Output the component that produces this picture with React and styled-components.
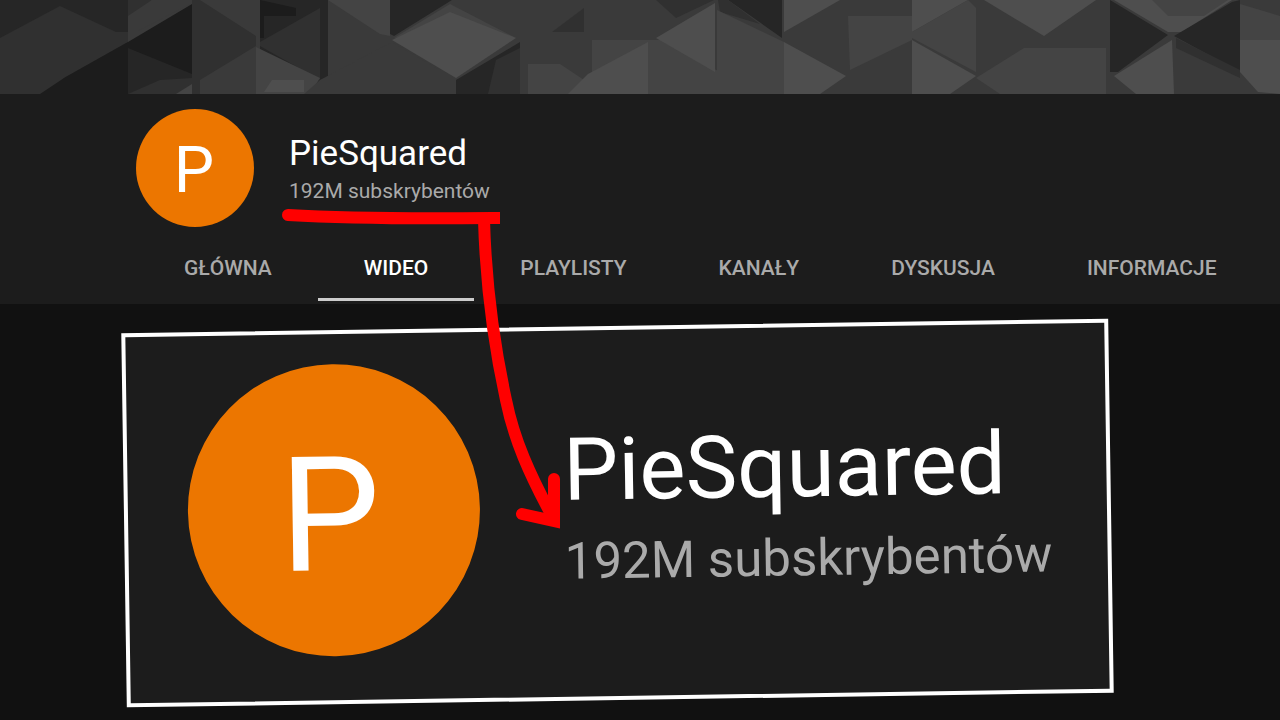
import React from 'react';
import styled, { createGlobalStyle } from 'styled-components';

const GlobalStyle = createGlobalStyle`
  * {
    box-sizing: border-box;
  }

  body {
    margin: 0;
    background-color: #111;
    font-family: Roboto, 'Liberation Sans', sans-serif;
  }
`;

const Page = styled.div`
  position: relative;
  min-height: 100vh;
  overflow: hidden;
  background-color: #111;
`;

const BannerArt = styled.svg`
  display: block;
  width: 100%;
  height: 94px;
  background-color: #3a3a3a;
`;

const ChannelHeader = styled.header`
  padding-bottom: 3px;
  background-color: #1c1c1c;
`;

const ChannelInfo = styled.div`
  display: flex;
  align-items: center;
  gap: 35px;
  padding: 15px 136px 0;
`;

const Avatar = styled.div`
  display: flex;
  flex: none;
  align-items: center;
  justify-content: center;
  width: ${({ $large }) => ($large ? '292px' : '118px')};
  height: ${({ $large }) => ($large ? '292px' : '118px')};
  padding: ${({ $large }) => ($large ? '12px 8px 0 0' : '6px 2px 0 0')};
  border-radius: 50%;
  background-color: #ec7600;
  color: #fff;
  font-size: ${({ $large }) => ($large ? '160px' : '64px')};
  font-weight: 400;
  line-height: 1;
`;

const Name = styled.h1`
  margin: 0;
  color: #fff;
  font-size: ${({ $large }) => ($large ? '87px' : '35px')};
  font-weight: 400;
  line-height: ${({ $large }) => ($large ? '108px' : '44px')};
`;

const Subscribers = styled.p`
  margin: 0;
  color: #aaa;
  font-size: ${({ $large }) => ($large ? '51px' : '21px')};
  line-height: ${({ $large }) => ($large ? '76px' : '30px')};
`;

const ChannelText = styled.div`
  padding-top: 2px;
`;

const Tabs = styled.nav`
  display: flex;
  padding-left: 138px;
`;

const Tab = styled.a`
  padding: 6px 46px 0;
  height: 74px;
  border-bottom: 3px solid ${({ $active }) => ($active ? '#ccc' : 'transparent')};
  color: ${({ $active }) => ($active ? '#fff' : '#aaa')};
  font-size: 21px;
  font-weight: 500;
  line-height: 70px;
  text-decoration: none;
  white-space: nowrap;
`;

const CloseUp = styled.section`
  display: flex;
  align-items: flex-start;
  gap: 84px;
  margin: 22px 169px 12px 124px;
  padding: 30px 0 44px 60px;
  border: 4px solid #fff;
  background-color: #1c1c1c;
  transform: rotate(-0.85deg);
`;

const CloseUpText = styled.div`
  padding-top: 55px;
`;

const Arrow = styled.svg`
  position: absolute;
  top: 200px;
  left: 280px;
  width: 300px;
  height: 340px;
  pointer-events: none;
`;

const tabs = ['GŁÓWNA', 'WIDEO', 'PLAYLISTY', 'KANAŁY', 'DYSKUSJA', 'INFORMACJE'];

const facets = [
  ['#262626', '0,0 128,0 128,94 0,94'],
  ['#303030', '0,38 60,6 116,32 128,32 128,42 64,78 48,94 0,94'],
  ['#1c1c1c', '40,94 64,78 128,42 192,4 192,94'],
  ['#303030', '128,0 152,0 128,24'],
  ['#3a3a3a', '152,0 192,0 192,3 136,32 128,32 128,16'],
  ['#262626', '128,48 192,74 192,94 128,94'],
  ['#303030', '160,80 192,78 192,94 128,94'],
  ['#444', '176,94 192,84 192,94'],
  ['#303030', '192,0 200,0 256,36 256,46 200,80 200,94 192,94'],
  ['#262626', '260,0 328,0 328,94 260,94'],
  ['#1c1c1c', '260,0 296,8 296,16 264,16 264,38 260,38'],
  ['#303030', '320,8 260,42 260,46 320,80'],
  ['#444', '256,47 320,78 310,94 256,94'],
  ['#4e4e4e', '272,80 304,80 304,92 264,92'],
  ['#3a3a3a', '320,80 392,42 440,70 440,94 304,94'],
  ['#444', '328,0 390,0 390,36 380,34'],
  ['#262626', '390,0 452,0 394,36 390,34'],
  ['#444', '394,38 450,4 516,38 480,30'],
  ['#4e4e4e', '392,40 450,12 516,38 456,78'],
  ['#262626', '456,80 520,42 520,64 488,94 456,94'],
  ['#303030', '520,48 520,94 488,94 496,60'],
  ['#303030', '552,32 584,8 584,32'],
  ['#444', '528,64 560,64 584,80 570,94 528,94'],
  ['#444', '592,40 662,40 720,72 720,94 592,94'],
  ['#4e4e4e', '568,94 588,74 648,42 648,94'],
  ['#303030', '656,0 714,0 676,18'],
  ['#4e4e4e', '656,38 715,3 715,72'],
  ['#262626', '728,0 782,0 782,38'],
  ['#303030', '718,0 728,0 760,24 720,12'],
  ['#444', '717,10 784,42 784,94 717,94'],
  ['#4e4e4e', '784,0 840,0 784,32'],
  ['#4e4e4e', '784,42 846,76 820,94 784,94'],
  ['#444', '848,16 912,16 912,40 850,70'],
  ['#4e4e4e', '912,0 968,0 912,32'],
  ['#444', '968,0 976,8 976,72 912,38 912,32'],
  ['#4e4e4e', '912,40 976,76 950,94 912,94'],
  ['#4e4e4e', '984,0 1096,0 1044,36'],
  ['#444', '1024,48 1106,48 1106,94 1000,94 976,78'],
  ['#262626', '1110,0 1168,35 1118,72 1110,72'],
  ['#4e4e4e', '1114,0 1232,0 1182,32 1168,32'],
  ['#444', '1152,0 1228,0 1204,16 1168,16'],
  ['#4e4e4e', '1172,40 1174,94 1136,94 1114,76'],
  ['#262626', '1232,2 1240,0 1240,72 1174,36'],
  ['#303030', '1176,38 1240,70 1240,78 1176,48'],
  ['#444', '1240,4 1280,16 1280,40 1240,40'],
  ['#4e4e4e', '1240,40 1280,40 1280,94 1258,92 1240,72'],
];

const Banner = () => (
  <BannerArt viewBox="0 0 1280 94" preserveAspectRatio="xMidYMin slice" aria-hidden="true">
    {facets.map(([fill, points]) => (
      <polygon key={points} fill={fill} points={points} />
    ))}
  </BannerArt>
);

const App = () => (
  <>
    <GlobalStyle />
    <Page>
      <Banner />
      <ChannelHeader>
        <ChannelInfo>
          <Avatar>P</Avatar>
          <ChannelText>
            <Name>PieSquared</Name>
            <Subscribers>192M subskrybentów</Subscribers>
          </ChannelText>
        </ChannelInfo>
        <Tabs>
          {tabs.map((tab) => (
            <Tab key={tab} href="#" $active={tab === 'WIDEO'}>
              {tab}
            </Tab>
          ))}
        </Tabs>
      </ChannelHeader>
      <CloseUp>
        <Avatar $large>P</Avatar>
        <CloseUpText>
          <Name as="h2" $large>
            PieSquared
          </Name>
          <Subscribers $large>192M subskrybentów</Subscribers>
        </CloseUpText>
      </CloseUp>
      <Arrow viewBox="280 200 300 340" fill="none" stroke="#f00" strokeWidth="12" aria-hidden="true">
        <path d="M288 215 C340 218 400 219 492 218" strokeLinecap="round" />
        <path d="M490 218 H500" />
        <path d="M484 220 C486 290 494 345 506 400 C514 440 530 475 552 516" />
        <path d="M554 479 L554 521 L522 514" strokeLinecap="round" strokeLinejoin="miter" />
      </Arrow>
    </Page>
  </>
);

export default App;
